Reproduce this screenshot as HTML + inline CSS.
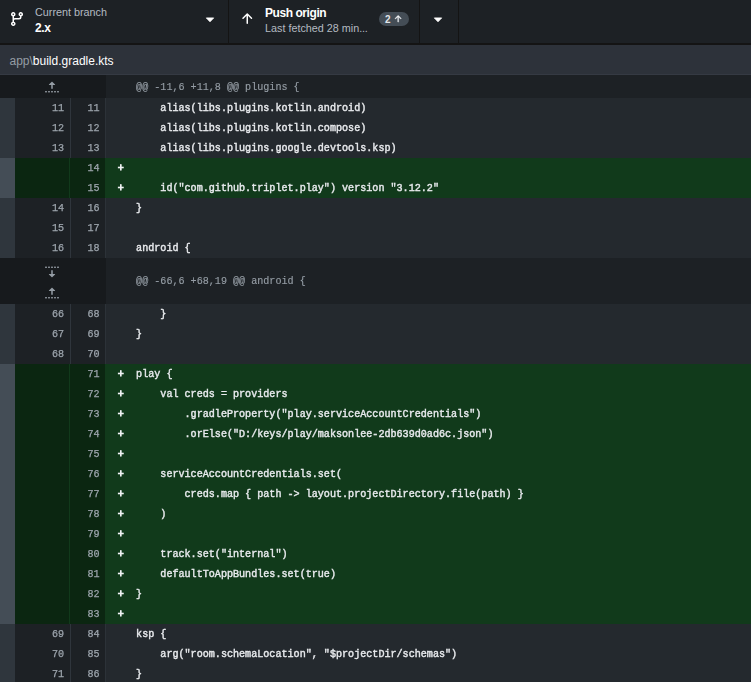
<!DOCTYPE html>
<html>
<head>
<meta charset="utf-8">
<title>GitHub Desktop</title>
<style>
*{box-sizing:border-box;margin:0;padding:0}
html,body{width:751px;height:682px;overflow:hidden;background:#24292e}
body{font-family:"Liberation Sans",sans-serif;color:#e1e4e8;position:relative}
#toolbar{position:absolute;left:0;top:0;width:751px;height:43px;background:#1d2125}
#tbborder{position:absolute;left:0;top:43px;width:751px;height:2px;background:#141414}
.sep{position:absolute;top:0;width:1px;height:43px;background:#141414}
.tb-desc{position:absolute;font-size:10.8px;color:#b4bac1;white-space:nowrap;line-height:14px}
.tb-title{position:absolute;font-size:12px;font-weight:bold;color:#fff;white-space:nowrap;line-height:14px;letter-spacing:-0.44px}
.ico{position:absolute;fill:#fff}
.pill{position:absolute;left:379px;top:12px;width:30px;height:14px;border-radius:7px;background:#444d56}
.pill span{position:absolute;left:6px;top:1px;font-size:10px;line-height:14px;font-weight:bold;color:#e1e4e8}
#fhead{position:absolute;left:0;top:45px;width:751px;height:30px;background:#2d323a;border-bottom:1px solid #353a43;font-size:12px;line-height:32px;white-space:nowrap}
#fhead .p{position:absolute;left:9.5px;top:0}
#fhead .dir{color:#959da5}
#fhead .fn{color:#fff}
#diff{position:absolute;left:0;top:75px;width:751px;will-change:transform}
.row{position:relative;height:20px;width:751px;font-family:"Liberation Mono",monospace;font-size:10.1px;line-height:20px}
.row pre{font-family:"Liberation Mono",monospace;font-size:10.1px;line-height:20px;position:absolute;left:30.1px;top:1px;color:#e8eaed;-webkit-text-stroke:0.4px #e8eaed}
.hd{position:absolute;left:0;top:0;width:15px;height:20px;background:#2f363d}
.n1{position:absolute;left:15px;top:0;width:56px;height:20px;background:#1d2125;color:#959da5;text-align:right;padding-right:6px;border-right:1px solid #2f353c;line-height:22px;font-size:10.1px;color:#9da5ad;-webkit-text-stroke:0.25px #9da5ad}
.n2{position:absolute;left:71px;top:0;width:35px;border-right:1px solid #2c3238;padding-right:5.5px;height:20px;background:#1d2125;color:#959da5;text-align:right;line-height:22px;font-size:10.1px;color:#9da5ad;-webkit-text-stroke:0.25px #9da5ad}
.c{position:absolute;left:106px;top:0;width:645px;height:20px;background:#24292e}
.mk{position:absolute;left:11.7px;top:1px;color:#f0f2f4;-webkit-text-stroke:0.8px #f0f2f4}
.add .hd{background:#444d56}
.add .n1{background:#0b2611;width:55px;padding-right:5px;border-color:#113a1b}
.add .n2{background:#0b2611;left:70px;width:35px;border-right:0;padding-right:5.5px}
.add .c{left:105px;width:646px}
.add .c pre{left:31.1px}
.add .mk{left:12.7px}
.add .c{background:#113a1b}
.hunk .hg{position:absolute;left:0;top:0;width:106px;height:100%;background:#171a1d}
.hunk .hc{position:absolute;left:106px;top:0;width:645px;height:100%;background:#1d2125}
.hunk pre{color:#959da5;-webkit-text-stroke:0.15px #959da5}
.h1{height:23px}
.h1 pre{line-height:23px}
.h2{height:46px}
.h2 pre{line-height:46px}
.fold{position:absolute;left:44px;fill:#959da5}
</style>
</head>
<body>
<div id="toolbar">
  <svg class="ico" style="left:9px;top:11px" viewBox="0 0 16 16" width="16" height="16"><path d="M9.5 3.25a2.25 2.25 0 1 1 3 2.122V6A2.5 2.5 0 0 1 10 8.5H6a1 1 0 0 0-1 1v1.128a2.251 2.251 0 1 1-1.5 0V5.372a2.25 2.25 0 1 1 1.5 0v1.836A2.493 2.493 0 0 1 6 7h4a1 1 0 0 0 1-1v-.628A2.25 2.25 0 0 1 9.5 3.25Zm-6 0a.75.75 0 1 0 1.5 0 .75.75 0 0 0-1.500 0Zm8.250-.75a.75.75 0 1 0 0 1.500.75.75 0 0 0 0-1.500ZM4.250 12a.75.75 0 1 0 0 1.500.75.75 0 0 0 0-1.500Z"/></svg>
  <div class="tb-desc" style="left:35px;top:5px">Current branch</div>
  <div class="tb-title" style="left:35px;top:21px">2.x</div>
  <svg class="ico" style="left:202px;top:12px" viewBox="0 0 16 16" width="16" height="16"><path d="M4.3 5.9h7.400L8 9.800z" stroke="#fff" stroke-width="0.8" stroke-linejoin="round"/></svg>
  <div class="sep" style="left:228px"></div>
  <svg class="ico" style="left:239px;top:11px" viewBox="0 0 16 16" width="16" height="16"><path d="M3.47 7.78a.75.75 0 0 1 0-1.060l4.250-4.250a.75.75 0 0 1 1.060 0l4.250 4.250a.751.751 0 0 1-.018 1.042.751.751 0 0 1-1.042.018L9 4.810v7.440a.75.75 0 0 1-1.500 0V4.810L4.530 7.780a.75.75 0 0 1-1.060 0Z"/></svg>
  <div class="tb-title" style="left:265px;top:6px">Push origin</div>
  <div class="tb-desc" style="left:265px;top:21px">Last fetched 28 min<span style="letter-spacing:-0.2px">...</span></div>
  <div class="pill"><span>2</span>
    <svg class="ico" style="left:14px;top:2px;fill:#f0f2f4;stroke:#f0f2f4;stroke-width:0.5" viewBox="0 0 16 16" width="10" height="10"><path d="M3.47 7.78a.75.75 0 0 1 0-1.060l4.250-4.250a.75.75 0 0 1 1.060 0l4.250 4.250a.751.751 0 0 1-.018 1.042.751.751 0 0 1-1.042.018L9 4.810v7.440a.75.75 0 0 1-1.500 0V4.810L4.530 7.780a.75.75 0 0 1-1.060 0Z"/></svg>
  </div>
  <div class="sep" style="left:419px"></div>
  <svg class="ico" style="left:430px;top:12px" viewBox="0 0 16 16" width="16" height="16"><path d="M4.3 5.9h7.400L8 9.800z" stroke="#fff" stroke-width="0.8" stroke-linejoin="round"/></svg>
  <div class="sep" style="left:458px"></div>
</div>
<div id="tbborder"></div>
<div id="fhead"><span class="p"><span class="dir">app\</span><span class="fn">build.gradle.kts</span></span></div>
<div id="diff">
<div class="row hunk h1"><div class="hg"><svg class="fold" style="top:5px" viewBox="0 0 16 16" width="16" height="16"><path d="M7.823 1.677L4.927 4.573A.25.25 0 005.104 5H7.25v3.236a.75.75 0 101.5 0V5h2.146a.25.25 0 00.177-.427L8.177 1.677a.25.25 0 00-.354 0zM13.75 11a.75.75 0 000 1.5h.5a.75.75 0 000-1.5h-.5zm-3.75.75a.75.75 0 01.75-.75h.5a.75.75 0 010 1.5h-.5a.75.75 0 01-.75-.75zM7.75 11a.75.75 0 000 1.5h.5a.75.75 0 000-1.5h-.5zM4 11.75a.75.75 0 01.75-.75h.5a.75.75 0 010 1.5h-.5a.75.75 0 01-.75-.75zM1.75 11a.75.75 0 000 1.5h.5a.75.75 0 000-1.5h-.5z"/></svg></div><div class="hc"><pre>@@ -11,6 +11,8 @@ plugins {</pre></div></div>
<div class="row ctx"><div class="hd"></div><div class="n1">11</div><div class="n2">11</div><div class="c"><pre>    alias(libs.plugins.kotlin.android)</pre></div></div>
<div class="row ctx"><div class="hd"></div><div class="n1">12</div><div class="n2">12</div><div class="c"><pre>    alias(libs.plugins.kotlin.compose)</pre></div></div>
<div class="row ctx"><div class="hd"></div><div class="n1">13</div><div class="n2">13</div><div class="c"><pre>    alias(libs.plugins.google.devtools.ksp)</pre></div></div>
<div class="row add"><div class="hd"></div><div class="n1"></div><div class="n2">14</div><div class="c"><span class="mk">+</span><pre></pre></div></div>
<div class="row add"><div class="hd"></div><div class="n1"></div><div class="n2">15</div><div class="c"><span class="mk">+</span><pre>    id("com.github.triplet.play") version "3.12.2"</pre></div></div>
<div class="row ctx"><div class="hd"></div><div class="n1">14</div><div class="n2">16</div><div class="c"><pre>}</pre></div></div>
<div class="row ctx"><div class="hd"></div><div class="n1">15</div><div class="n2">17</div><div class="c"><pre></pre></div></div>
<div class="row ctx"><div class="hd"></div><div class="n1">16</div><div class="n2">18</div><div class="c"><pre>android {</pre></div></div>
<div class="row hunk h2"><div class="hg"><svg class="fold" style="top:5px" viewBox="0 0 16 16" width="16" height="16"><path d="M8.177 14.323l2.896-2.896a.25.25 0 00-.177-.427H8.750V7.764a.75.75 0 10-1.5 0V11H5.104a.25.25 0 00-.177.427l2.896 2.896a.25.25 0 00.354 0zM2.25 5a.75.75 0 000-1.5h-.5a.75.75 0 000 1.5h.5zM6 4.250a.75.75 0 01-.75.75h-.5a.75.75 0 010-1.5h.5a.75.75 0 01.75.75zM8.250 5a.75.75 0 000-1.5h-.5a.75.75 0 000 1.5h.5zM12 4.250a.75.75 0 01-.75.75h-.5a.75.75 0 010-1.5h.5a.75.75 0 01.75.75zm2.250.75a.75.75 0 000-1.5h-.5a.75.75 0 000 1.5h.5z"/></svg><svg class="fold" style="top:28px" viewBox="0 0 16 16" width="16" height="16"><path d="M7.823 1.677L4.927 4.573A.25.25 0 005.104 5H7.25v3.236a.75.75 0 101.5 0V5h2.146a.25.25 0 00.177-.427L8.177 1.677a.25.25 0 00-.354 0zM13.75 11a.75.75 0 000 1.5h.5a.75.75 0 000-1.5h-.5zm-3.75.75a.75.75 0 01.75-.75h.5a.75.75 0 010 1.5h-.5a.75.75 0 01-.75-.75zM7.75 11a.75.75 0 000 1.5h.5a.75.75 0 000-1.5h-.5zM4 11.75a.75.75 0 01.75-.75h.5a.75.75 0 010 1.5h-.5a.75.75 0 01-.75-.75zM1.75 11a.75.75 0 000 1.5h.5a.75.75 0 000-1.5h-.5z"/></svg></div><div class="hc"><pre>@@ -66,6 +68,19 @@ android {</pre></div></div>
<div class="row ctx"><div class="hd"></div><div class="n1">66</div><div class="n2">68</div><div class="c"><pre>    }</pre></div></div>
<div class="row ctx"><div class="hd"></div><div class="n1">67</div><div class="n2">69</div><div class="c"><pre>}</pre></div></div>
<div class="row ctx"><div class="hd"></div><div class="n1">68</div><div class="n2">70</div><div class="c"><pre></pre></div></div>
<div class="row add"><div class="hd"></div><div class="n1"></div><div class="n2">71</div><div class="c"><span class="mk">+</span><pre>play {</pre></div></div>
<div class="row add"><div class="hd"></div><div class="n1"></div><div class="n2">72</div><div class="c"><span class="mk">+</span><pre>    val creds = providers</pre></div></div>
<div class="row add"><div class="hd"></div><div class="n1"></div><div class="n2">73</div><div class="c"><span class="mk">+</span><pre>        .gradleProperty("play.serviceAccountCredentials")</pre></div></div>
<div class="row add"><div class="hd"></div><div class="n1"></div><div class="n2">74</div><div class="c"><span class="mk">+</span><pre>        .orElse("D:/keys/play/maksonlee-2db639d0ad6c.json")</pre></div></div>
<div class="row add"><div class="hd"></div><div class="n1"></div><div class="n2">75</div><div class="c"><span class="mk">+</span><pre></pre></div></div>
<div class="row add"><div class="hd"></div><div class="n1"></div><div class="n2">76</div><div class="c"><span class="mk">+</span><pre>    serviceAccountCredentials.set(</pre></div></div>
<div class="row add"><div class="hd"></div><div class="n1"></div><div class="n2">77</div><div class="c"><span class="mk">+</span><pre>        creds.map { path -&gt; layout.projectDirectory.file(path) }</pre></div></div>
<div class="row add"><div class="hd"></div><div class="n1"></div><div class="n2">78</div><div class="c"><span class="mk">+</span><pre>    )</pre></div></div>
<div class="row add"><div class="hd"></div><div class="n1"></div><div class="n2">79</div><div class="c"><span class="mk">+</span><pre></pre></div></div>
<div class="row add"><div class="hd"></div><div class="n1"></div><div class="n2">80</div><div class="c"><span class="mk">+</span><pre>    track.set("internal")</pre></div></div>
<div class="row add"><div class="hd"></div><div class="n1"></div><div class="n2">81</div><div class="c"><span class="mk">+</span><pre>    defaultToAppBundles.set(true)</pre></div></div>
<div class="row add"><div class="hd"></div><div class="n1"></div><div class="n2">82</div><div class="c"><span class="mk">+</span><pre>}</pre></div></div>
<div class="row add"><div class="hd"></div><div class="n1"></div><div class="n2">83</div><div class="c"><span class="mk">+</span><pre></pre></div></div>
<div class="row ctx"><div class="hd"></div><div class="n1">69</div><div class="n2">84</div><div class="c"><pre>ksp {</pre></div></div>
<div class="row ctx"><div class="hd"></div><div class="n1">70</div><div class="n2">85</div><div class="c"><pre>    arg("room.schemaLocation", "$projectDir/schemas")</pre></div></div>
<div class="row ctx"><div class="hd"></div><div class="n1">71</div><div class="n2">86</div><div class="c"><pre>}</pre></div></div>
</div>
</body>
</html>
